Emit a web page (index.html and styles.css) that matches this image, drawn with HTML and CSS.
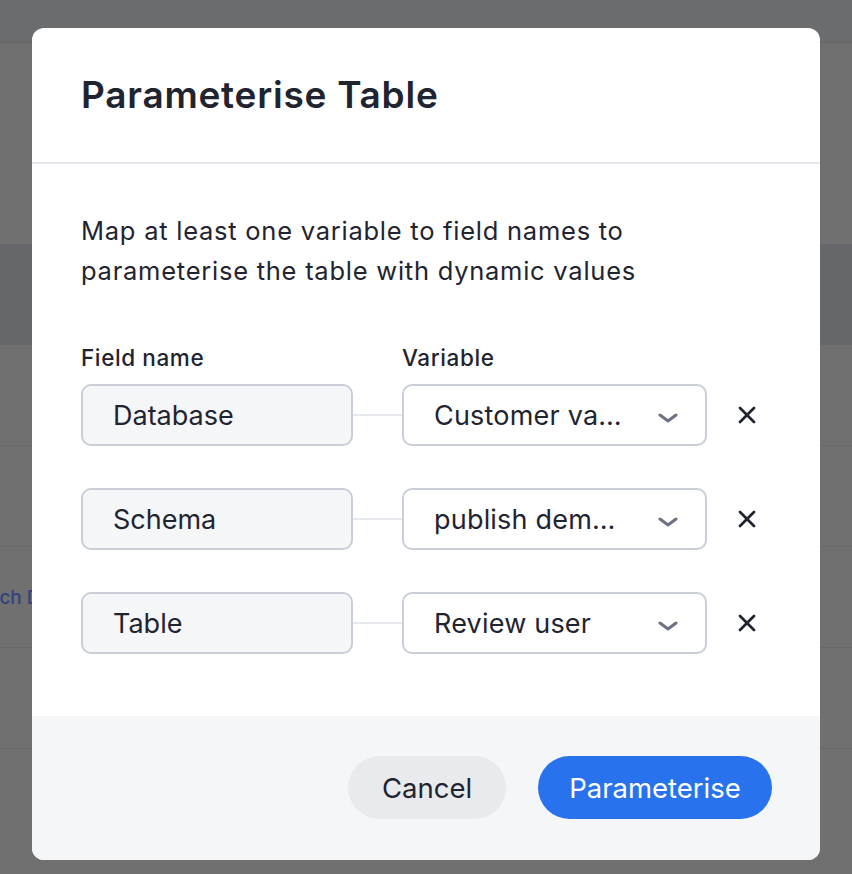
FILE: index.html
```html
<!DOCTYPE html>
<html lang="en">
<head>
<meta charset="utf-8">
<title>Parameterise Table</title>
<link rel="stylesheet" href="styles.css">
</head>
<body>
<div class="page">
  <div class="topbar"></div>
  <div class="spacer"></div>
  <div class="row row-active"></div>
  <div class="row"></div>
  <div class="row"></div>
  <div class="row"><span class="link">Search Data</span></div>
  <div class="row"></div>
</div>

<div class="overlay">
  <div class="modal" role="dialog" aria-labelledby="modal-title">
    <header class="modal-header">
      <h1 id="modal-title" class="modal-title">Parameterise Table</h1>
    </header>
    <section class="modal-body">
      <p class="intro">Map at least one variable to field names to parameterise the table with dynamic values</p>
      <div class="grid">
        <div class="label">Field name</div>
        <div></div>
        <div class="label">Variable</div>
        <div></div>

        <div class="field">Database</div>
        <div class="connector"></div>
        <div class="select"><span class="select-text">Customer va…</span><svg class="chev" viewBox="0 0 20 10" width="20" height="10"><path d="M2 2l8 6 8-6" fill="none" stroke="#6b7280" stroke-width="3" stroke-linecap="round" stroke-linejoin="round"/></svg></div>
        <button class="remove" aria-label="Remove"><svg viewBox="0 0 18 18" width="18" height="18"><path d="M2 2l14 14M16 2L2 16" stroke="#1f2430" stroke-width="2.8" stroke-linecap="round"/></svg></button>

        <div class="field">Schema</div>
        <div class="connector"></div>
        <div class="select"><span class="select-text">publish dem…</span><svg class="chev" viewBox="0 0 20 10" width="20" height="10"><path d="M2 2l8 6 8-6" fill="none" stroke="#6b7280" stroke-width="3" stroke-linecap="round" stroke-linejoin="round"/></svg></div>
        <button class="remove" aria-label="Remove"><svg viewBox="0 0 18 18" width="18" height="18"><path d="M2 2l14 14M16 2L2 16" stroke="#1f2430" stroke-width="2.8" stroke-linecap="round"/></svg></button>

        <div class="field">Table</div>
        <div class="connector"></div>
        <div class="select"><span class="select-text">Review user</span><svg class="chev" viewBox="0 0 20 10" width="20" height="10"><path d="M2 2l8 6 8-6" fill="none" stroke="#6b7280" stroke-width="3" stroke-linecap="round" stroke-linejoin="round"/></svg></div>
        <button class="remove" aria-label="Remove"><svg viewBox="0 0 18 18" width="18" height="18"><path d="M2 2l14 14M16 2L2 16" stroke="#1f2430" stroke-width="2.8" stroke-linecap="round"/></svg></button>
      </div>
    </section>
    <footer class="modal-footer">
      <button class="btn btn-secondary">Cancel</button>
      <button class="btn btn-primary">Parameterise</button>
    </footer>
  </div>
</div>
</body>
</html>
```

FILE: styles.css
```css
* { box-sizing: border-box; }
html, body { margin: 0; padding: 0; }
body {
  width: 852px;
  height: 874px;
  overflow: hidden;
  background: #707071;
  font-family: Inter, "Noto Sans", sans-serif;
  color: #1f2430;
  position: relative;
}

/* dimmed underlying page */
.page { display: flex; flex-direction: column; }
.topbar { height: 43px; background: #6b6c6e; border-bottom: 1px solid #646567; }
.spacer { height: 201px; }
.row { height: 101px; border-bottom: 1px solid #67686a; display: flex; align-items: center; }
.row-active { background: #66676b; }
.link {
  font-size: 19px;
  font-weight: 500;
  color: #32427c;
  margin-left: -42px;
  white-space: nowrap;
}

.overlay {
  position: absolute;
  inset: 0;
}

.modal {
  position: absolute;
  left: 32px;
  top: 28px;
  width: 788px;
  height: 832px;
  background: #ffffff;
  border-radius: 12px;
  overflow: hidden;
  display: flex;
  flex-direction: column;
}

.modal-header {
  padding: 46px 48px 46px 49px;
  border-bottom: 2px solid #e6e9ee;
}
.modal-title {
  margin: 0;
  font-size: 37px;
  line-height: 42px;
  font-weight: 600;
  letter-spacing: 0.75px;
  color: #1f2430;
}

.modal-body {
  flex: 1;
  padding: 47px 48px 0 49px;
}
.intro {
  margin: 0;
  font-size: 25.5px;
  line-height: 40px;
  letter-spacing: 0.75px;
  color: #1f2430;
  max-width: 640px;
}

.grid {
  margin-top: 53px;
  display: grid;
  grid-template-columns: 272px 49px 305px 1fr;
  align-items: center;
}
.label {
  font-size: 22.5px;
  line-height: 28px;
  font-weight: 500;
  letter-spacing: 0.6px;
  color: #1f2430;
  margin-bottom: 12px;
}
.field, .select {
  height: 62px;
  border: 2px solid #c9ced8;
  border-radius: 10px;
  font-size: 27px;
  display: flex;
  align-items: center;
  padding-left: 30px;
  margin-bottom: 42px;
  color: #1f2430;
}
.field { background: #f5f6f8; }
.select {
  background: #ffffff;
  justify-content: space-between;
  padding-right: 27px;
}
.select-text { white-space: nowrap; letter-spacing: 0.2px; }
.chev { margin-top: 6px; }
.connector {
  height: 2px;
  background: #e6e9ee;
  margin-bottom: 42px;
}
.grid > .field:nth-last-child(4),
.grid > .connector:nth-last-child(3),
.grid > .select:nth-last-child(2),
.grid > .remove:nth-last-child(1) { margin-bottom: 0; }
.remove {
  justify-self: start;
  margin-left: 31px;
  margin-bottom: 42px;
  padding: 0;
  border: 0;
  background: transparent;
  width: 18px;
  height: 18px;
  display: flex;
}

.modal-footer {
  height: 144px;
  background: #f5f6f8;
  display: flex;
  justify-content: flex-end;
  align-items: center;
  gap: 32px;
  padding: 0 48px 1px;
}
.btn {
  height: 63px;
  border-radius: 32px;
  border: 0;
  font-family: Inter, "Noto Sans", sans-serif;
  font-size: 27.5px;
  font-weight: 400;
  padding: 0;
}
.btn-secondary { background: #e8eaee; color: #1f2430; width: 158px; }
.btn-primary { background: #2872ee; color: #ffffff; width: 234px; }
```
